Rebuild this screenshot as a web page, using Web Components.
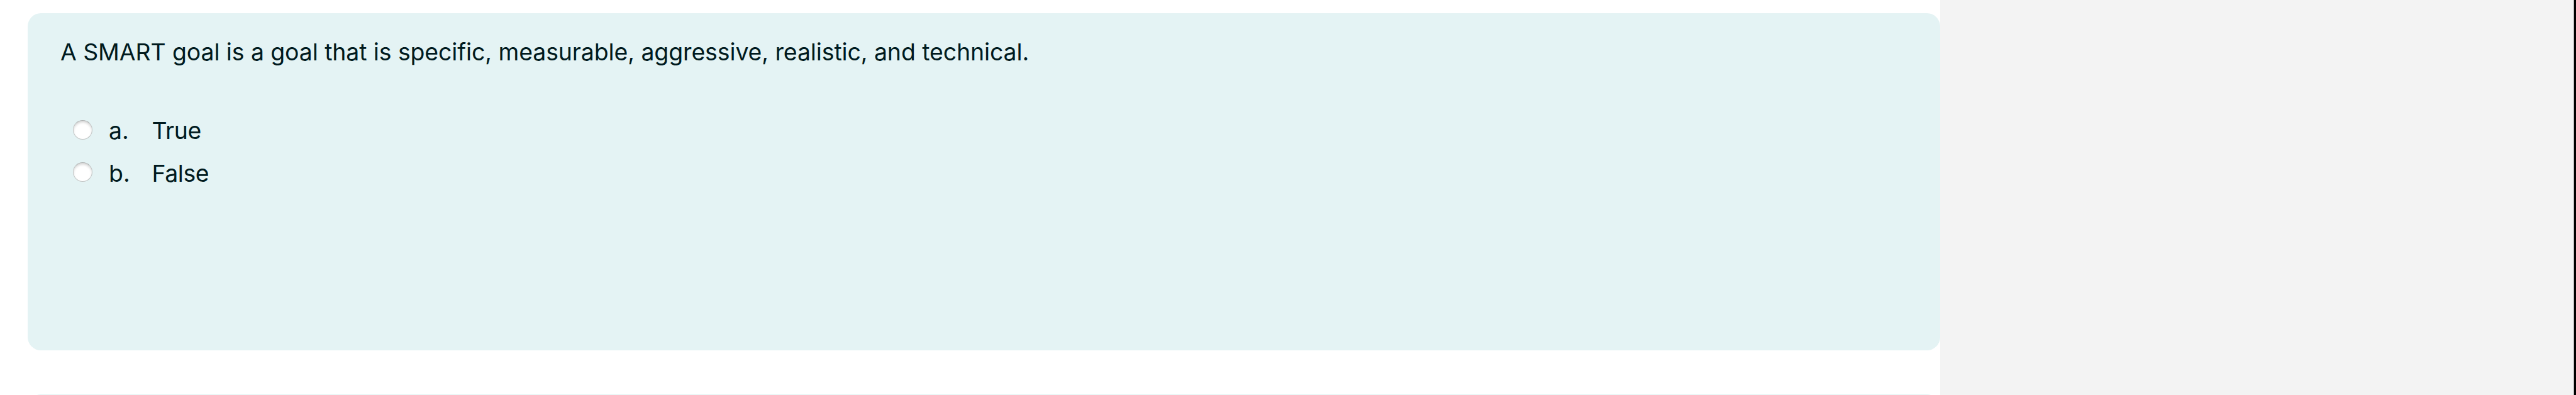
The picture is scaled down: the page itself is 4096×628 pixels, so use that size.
<!DOCTYPE html>
<html lang="en">
<head>
  <meta charset="utf-8">
  <title>Quiz</title>
  <style>
    html, body {
      margin: 0;
      height: 100%;
      overflow: hidden;
    }
    body {
      font-family: Inter, "Liberation Sans", sans-serif;
      font-size: 37.4px;
      line-height: 56px;
      color: #001a1e;
    }
  </style>
</head>
<body>
  <quiz-page>
    <quiz-question>
      <span slot="stem">A SMART goal is a goal that is specific, measurable, aggressive, realistic, and technical.</span>
      <quiz-option letter="a.">True</quiz-option>
      <quiz-option letter="b.">False</quiz-option>
    </quiz-question>
    <quiz-question></quiz-question>
  </quiz-page>

  <script>
    'use strict';

    (function() {
      class QuizPage extends HTMLElement {
        constructor() {
          super();

          const shadow = this.attachShadow({ mode: 'open' });

          shadow.innerHTML = `
            <style>
              :host {
                display: flex;
                box-sizing: border-box;
                height: 100vh;
                overflow: hidden;
                background: #f3f3f3;
                border-right: 3px solid #000;
              }
              .content {
                box-sizing: border-box;
                flex: none;
                display: flex;
                flex-direction: column;
                gap: 69.6px;
                width: 3085px;
                padding: 21.4px 0 0 44px;
                background: #fff;
              }
              .drawer {
                flex: 1;
                border-right: 1px solid #a5a5a5;
              }
            </style>
            <main class="content"><slot></slot></main>
            <aside class="drawer"></aside>
          `;
        }
      }

      class QuizQuestion extends HTMLElement {
        constructor() {
          super();

          const shadow = this.attachShadow({ mode: 'open' });

          shadow.innerHTML = `
            <style>
              :host {
                display: block;
                box-sizing: border-box;
                flex: none;
                height: 536px;
                padding: 33.8px 52px 0;
                border-radius: 21px;
                background: #e4f3f4;
              }
              .stem {
                letter-spacing: -0.08px;
                white-space: nowrap;
              }
              .answers {
                margin-top: 63.5px;
                padding-left: 20px;
              }
            </style>
            <div class="stem"><slot name="stem"></slot></div>
            <div class="answers"><slot></slot></div>
          `;
        }
      }

      class QuizOption extends HTMLElement {
        constructor() {
          super();

          const shadow = this.attachShadow({ mode: 'open' });

          shadow.innerHTML = `
            <style>
              :host {
                display: block;
              }
              label {
                display: flex;
                align-items: center;
                height: 67.25px;
              }
              input {
                appearance: none;
                box-sizing: border-box;
                flex: none;
                width: 31px;
                height: 31px;
                margin: 0 26px 4px 0;
                border: 1px solid #c2c5c5;
                border-top-color: #adb0b0;
                border-radius: 50%;
                background: #fff;
                box-shadow: inset 0 3px 4px -1px rgba(0, 0, 0, .2);
              }
              .letter {
                flex: none;
                width: 68.5px;
              }
              .text {
                letter-spacing: -0.4px;
              }
            </style>
            <label>
              <input type="radio" name="answer">
              <span class="letter"></span>
              <span class="text"><slot></slot></span>
            </label>
          `;
        }

        connectedCallback() {
          this.shadowRoot.querySelector('.letter').textContent = this.getAttribute('letter');
        }
      }

      customElements.define('quiz-page', QuizPage);
      customElements.define('quiz-question', QuizQuestion);
      customElements.define('quiz-option', QuizOption);
    })();
  </script>
</body>
</html>
